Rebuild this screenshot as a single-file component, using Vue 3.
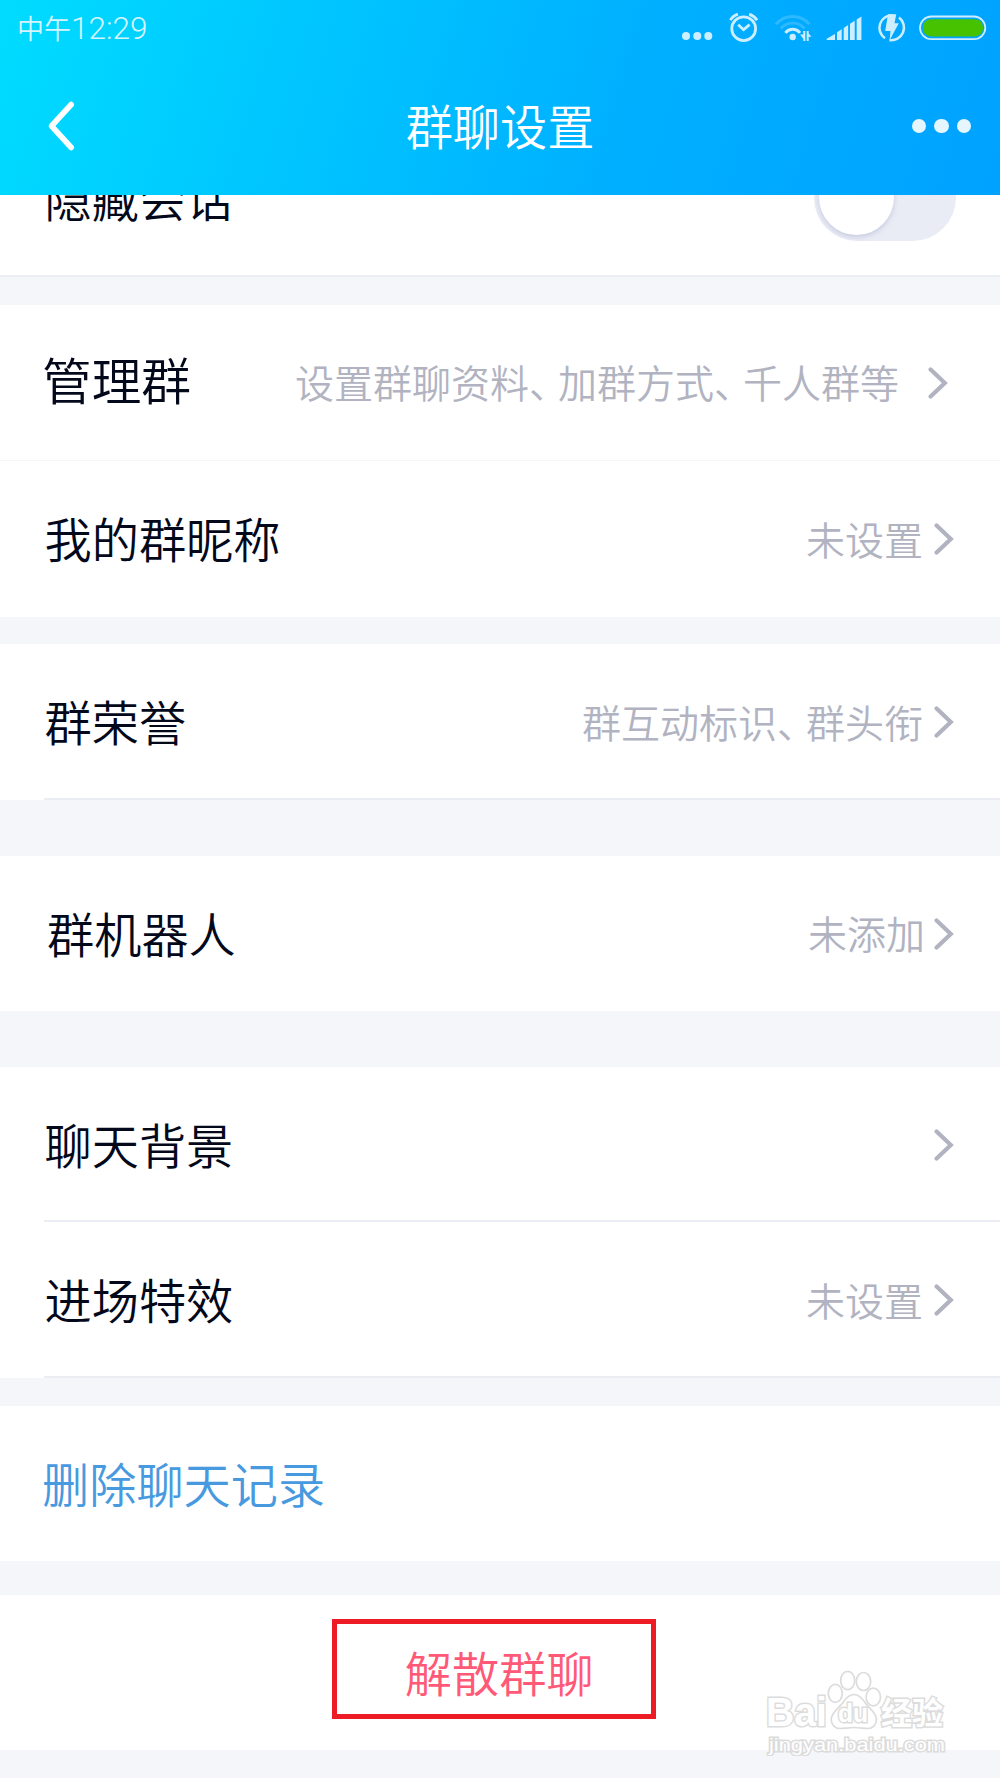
<template>
  <div class="page">
    <header class="header">
      <div class="status-bar">
        <span class="time">中午<span class="digits">12:29</span></span>
        <svg class="status-icons" width="320" height="56" viewBox="0 0 320 56" fill="#cceeff">
          <!-- 通知 -->
          <circle cx="6" cy="36" r="4" />
          <circle cx="17.3" cy="36" r="4" />
          <circle cx="28.3" cy="36" r="4" />
          <!-- 闹钟 -->
          <g fill="none" stroke="#cceeff" stroke-width="2.8">
            <circle cx="63.7" cy="28.7" r="11.9" />
            <path d="M58.2 24.7l5.4 5 6-5" />
            <path d="M50.3 20.2q2.2-4 7.6-6.1M69.2 14.1q5.4 2.1 7.8 6.1" />
          </g>
          <!-- WiFi -->
          <g fill="none" stroke="#cceeff" stroke-width="3">
            <path d="M96 24.2q6.8-7.7 16.7-7.7t16.7 7.7" opacity="0.22" />
            <path d="M100.8 28.6q4.9-5.6 11.9-5.6t11.9 5.6" opacity="0.22" />
            <path d="M105.4 32.9q3-3.6 7.3-3.6t7.3 3.6" />
          </g>
          <circle cx="112.7" cy="37" r="3.2" />
          <path d="M123.300 31h2v10h-2v-2.200L120 34.600h3.300zM126.700 31h2v2.400l2.800 3.400h-2.800V41h-2z" />
          <!-- 信号 -->
          <path d="M146.700 40v-1.200L155 34v6zM157 40v-7.800l4.700-3v10.800zM163.700 40v-12l4.400-2.900v14.900zM170 40v-16.200l4.700-3v19.200zM176.700 40v-20.500l4.700-3v23.500z" />
          <!-- 充电 -->
          <g fill="none" stroke="#cceeff" stroke-width="2.500">
            <path d="M213 15.200a12.600 12.600 0 0 0-8 23" />
            <path d="M219 17.600a12.600 12.600 0 0 1-9.500 22.500" />
          </g>
          <path d="M208 14.300h8.300l-1.800 9h4.300L209.600 40.200l.9-9.200h-5.300z" />
          <!-- 电池 -->
          <rect x="240" y="16.500" width="65.300" height="22.600" rx="11.300" fill="none" stroke="#cceeff" stroke-width="1.800" />
          <rect x="242.900" y="19.200" width="60.100" height="17.200" rx="8" fill="#46c200" />
        </svg>
      </div>
      <div class="nav">
        <svg class="back" width="30" height="56" viewBox="0 0 30 56" @click="goBack">
          <path d="M24.200 6.500L4.500 28l19.700 21.500" fill="none" stroke="#fff" stroke-width="5.600" stroke-linecap="round" stroke-linejoin="round" />
        </svg>
        <h1 class="title">群聊设置</h1>
        <div class="more"><i></i><i></i><i></i></div>
      </div>
    </header>

    <main class="list">
      <section class="group group-hidden">
        <div class="row">
          <span class="label">隐藏会话</span>
          <button class="switch" :class="{ on: hideChat }" @click="hideChat = !hideChat"><i></i></button>
        </div>
      </section>

      <section v-for="group in groups" :key="group.name" class="group" :class="group.name">
        <div v-for="row in group.rows" :key="row.label" class="row" :class="row.type">
          <span class="label">{{ row.label }}</span>
          <span class="value">
            <span v-for="(part, i) in row.value" :key="part">{{ part }}<span v-if="i < row.value.length - 1" class="comma">、</span></span>
          </span>
          <svg class="arrow" width="20" height="32" viewBox="0 0 20 32">
            <path d="M2.600 2.500L16.800 16 2.600 29.500" fill="none" stroke="#b1b3c1" stroke-width="4.200" stroke-linecap="round" stroke-linejoin="miter" />
          </svg>
        </div>
      </section>

      <section class="group group-clear">
        <div class="row">
          <span class="label link">删除聊天记录</span>
        </div>
      </section>

      <section class="group group-dismiss">
        <div class="row dismiss">
          <span class="danger">解散群聊</span>
          <div class="mark"></div>
        </div>
      </section>
    </main>

    <svg class="watermark" width="190" height="96" viewBox="0 0 190 96">
      <g fill="#fff" stroke="#dcdcdc" stroke-width="1.700">
        <ellipse cx="75.300" cy="33.300" rx="7" ry="9" />
        <ellipse cx="87.700" cy="20.500" rx="7" ry="9.200" />
        <ellipse cx="103.500" cy="21.500" rx="7.200" ry="9" />
        <ellipse cx="113.300" cy="37" rx="7.200" ry="8.800" />
        <path d="M94 34.500c-5 0-8 3.500-11 8-4 5.500-11.800 10-11.800 17 0 5.500 4 9 9 9 4.500 0 8-1 13.800-1s9.500 1 13.500 1c5 0 9-3.500 9-9 0-7-7.500-11-11.500-17-3-4.500-6-8-11-8z" />
        <g stroke-width="3" paint-order="stroke">
          <text class="wm-latin" x="6" y="66" font-size="40" textLength="61" lengthAdjust="spacingAndGlyphs">Bai</text>
          <text class="wm-latin" x="78" y="62" font-size="25" textLength="30" lengthAdjust="spacingAndGlyphs">du</text>
          <text class="wm-cjk" x="121" y="64" font-size="31">经验</text>
          <text class="wm-url" x="9" y="91" font-size="19" textLength="176" lengthAdjust="spacingAndGlyphs">jingyan.baidu.com</text>
        </g>
      </g>
    </svg>
  </div>
</template>

<script setup>
import { ref } from 'vue';

// 隐藏会话开关
const hideChat = ref(false);

// 设置项列表
const groups = [
  {
    name: 'group-manage',
    rows: [
      { label: '管理群', value: ['设置群聊资料', '加群方式', '千人群等'], type: 'large' },
      { label: '我的群昵称', value: ['未设置'], type: '' },
    ],
  },
  {
    name: 'group-honor',
    rows: [{ label: '群荣誉', value: ['群互动标识', '群头衔'], type: 'lined' }],
  },
  {
    name: 'group-robot',
    rows: [{ label: '群机器人', value: ['未添加'], type: 'robot' }],
  },
  {
    name: 'group-look',
    rows: [
      { label: '聊天背景', value: [], type: 'lined' },
      { label: '进场特效', value: ['未设置'], type: 'lined' },
    ],
  },
];

const goBack = () => {
  window.history.back();
};
</script>

<style>
body {
  margin: 0;
  background: #f4f6fa;
}
</style>

<style scoped>
.page {
  position: relative;
  width: 1000px;
  height: 1778px;
  overflow: hidden;
  background: #f4f6fa;
  font-family: "Noto Sans CJK SC", sans-serif;
  font-weight: 350;
  color: #03081a;
}

.header {
  position: relative;
  z-index: 1;
  height: 195px;
  background: linear-gradient(107deg, #00dcff 0%, #00c6ff 30%, #00b0ff 62%, #00a2ff 100%);
}

.status-bar {
  display: flex;
  justify-content: space-between;
  height: 56px;
}

.time {
  margin-left: 17px;
  font-size: 27px;
  line-height: 56px;
  color: #d4f5ff;
  font-weight: 350;
}

.digits {
  font-family: Roboto, sans-serif;
  font-size: 31.5px;
  font-weight: 350;
}

.nav {
  display: flex;
  align-items: center;
  justify-content: space-between;
  height: 140px;
  padding: 0 29px 0 47px;
}

.title {
  margin: 0;
  padding-left: 11px;
  font-size: 47.2px;
  line-height: 60px;
  font-weight: 350;
  color: #fff;
  transform: translateY(-1px);
}

.more {
  display: flex;
  gap: 8px;
}

.more i {
  width: 14.300px;
  height: 14.300px;
  border-radius: 50%;
  background: #e5f6ff;
}

.list {
  margin-top: -75px;
}

.group {
  background: #fff;
}

.group-hidden {
  height: 155px;
  border-bottom: 2px solid #ebeff5;
  margin-bottom: 28px;
}

.group-manage {
  margin-bottom: 27px;
}

.group-honor {
  margin-bottom: 56px;
}

.group-robot {
  margin-bottom: 56px;
}

.group-look {
  margin-bottom: 28px;
}

.group-clear {
  margin-bottom: 34px;
}

.row {
  position: relative;
  box-sizing: border-box;
  display: flex;
  align-items: center;
  height: 155px;
  padding: 0 46px 0 44.500px;
}

.group-manage .row {
  height: 156px;
}

.group-honor .row,
.group-look .row:last-child {
  height: 156px;
}

.label {
  font-size: 47.200px;
  line-height: 60px;
  padding-bottom: 2px;
  white-space: nowrap;
}

.large {
  padding-left: 42px;
  padding-right: 52px;
  border-bottom: 1px solid #f4f6fa;
}

.large .label {
  font-size: 49.700px;
  padding-bottom: 9px;
}

.large .value {
  margin-right: 29px;
}

.robot {
  padding-left: 47px;
}

.robot .value {
  margin-right: 9px;
}

/* 从文字左侧开始的分隔线 */
.lined::after {
  content: "";
  position: absolute;
  left: 44px;
  right: 0;
  bottom: 0;
  height: 2px;
  background: #ebedf5;
}

.value {
  margin-left: auto;
  margin-right: 11px;
  padding-bottom: 3px;
  font-size: 39px;
  line-height: 50px;
  color: #b1b3c1;
  white-space: nowrap;
}

.comma {
  letter-spacing: -10px;
}

.arrow {
  flex: none;
}

.link {
  margin-left: -2.500px;
  color: #4799e0;
}

.switch {
  position: relative;
  width: 142px;
  height: 87px;
  margin-left: auto;
  margin-right: -2px;
  padding: 0;
  border: none;
  border-radius: 44px;
  background: #e9ecf5;
}

.switch i {
  position: absolute;
  left: 5px;
  top: 6px;
  width: 75px;
  height: 75px;
  border-radius: 50%;
  background: #fff;
  box-shadow: 0 2px 5px rgba(120, 120, 170, 0.3);
}

.switch.on {
  background: #00b4ff;
}

.switch.on i {
  left: 62px;
}

.dismiss {
  justify-content: center;
}

.danger {
  font-size: 47.200px;
  line-height: 60px;
  padding-bottom: 2px;
  color: #ff5977;
}

.mark {
  position: absolute;
  box-sizing: border-box;
  left: 332px;
  top: 24px;
  width: 324px;
  height: 100px;
  border: 5px solid #ed1b24;
}

.watermark {
  position: absolute;
  left: 760px;
  top: 1660px;
}

.wm-latin {
  font-family: "Liberation Sans", sans-serif;
  font-weight: 700;
}

.wm-cjk {
  font-family: "Noto Sans CJK SC", sans-serif;
  font-weight: 700;
}

.wm-url {
  font-family: "Liberation Sans", sans-serif;
  font-weight: 400;
}
</style>
